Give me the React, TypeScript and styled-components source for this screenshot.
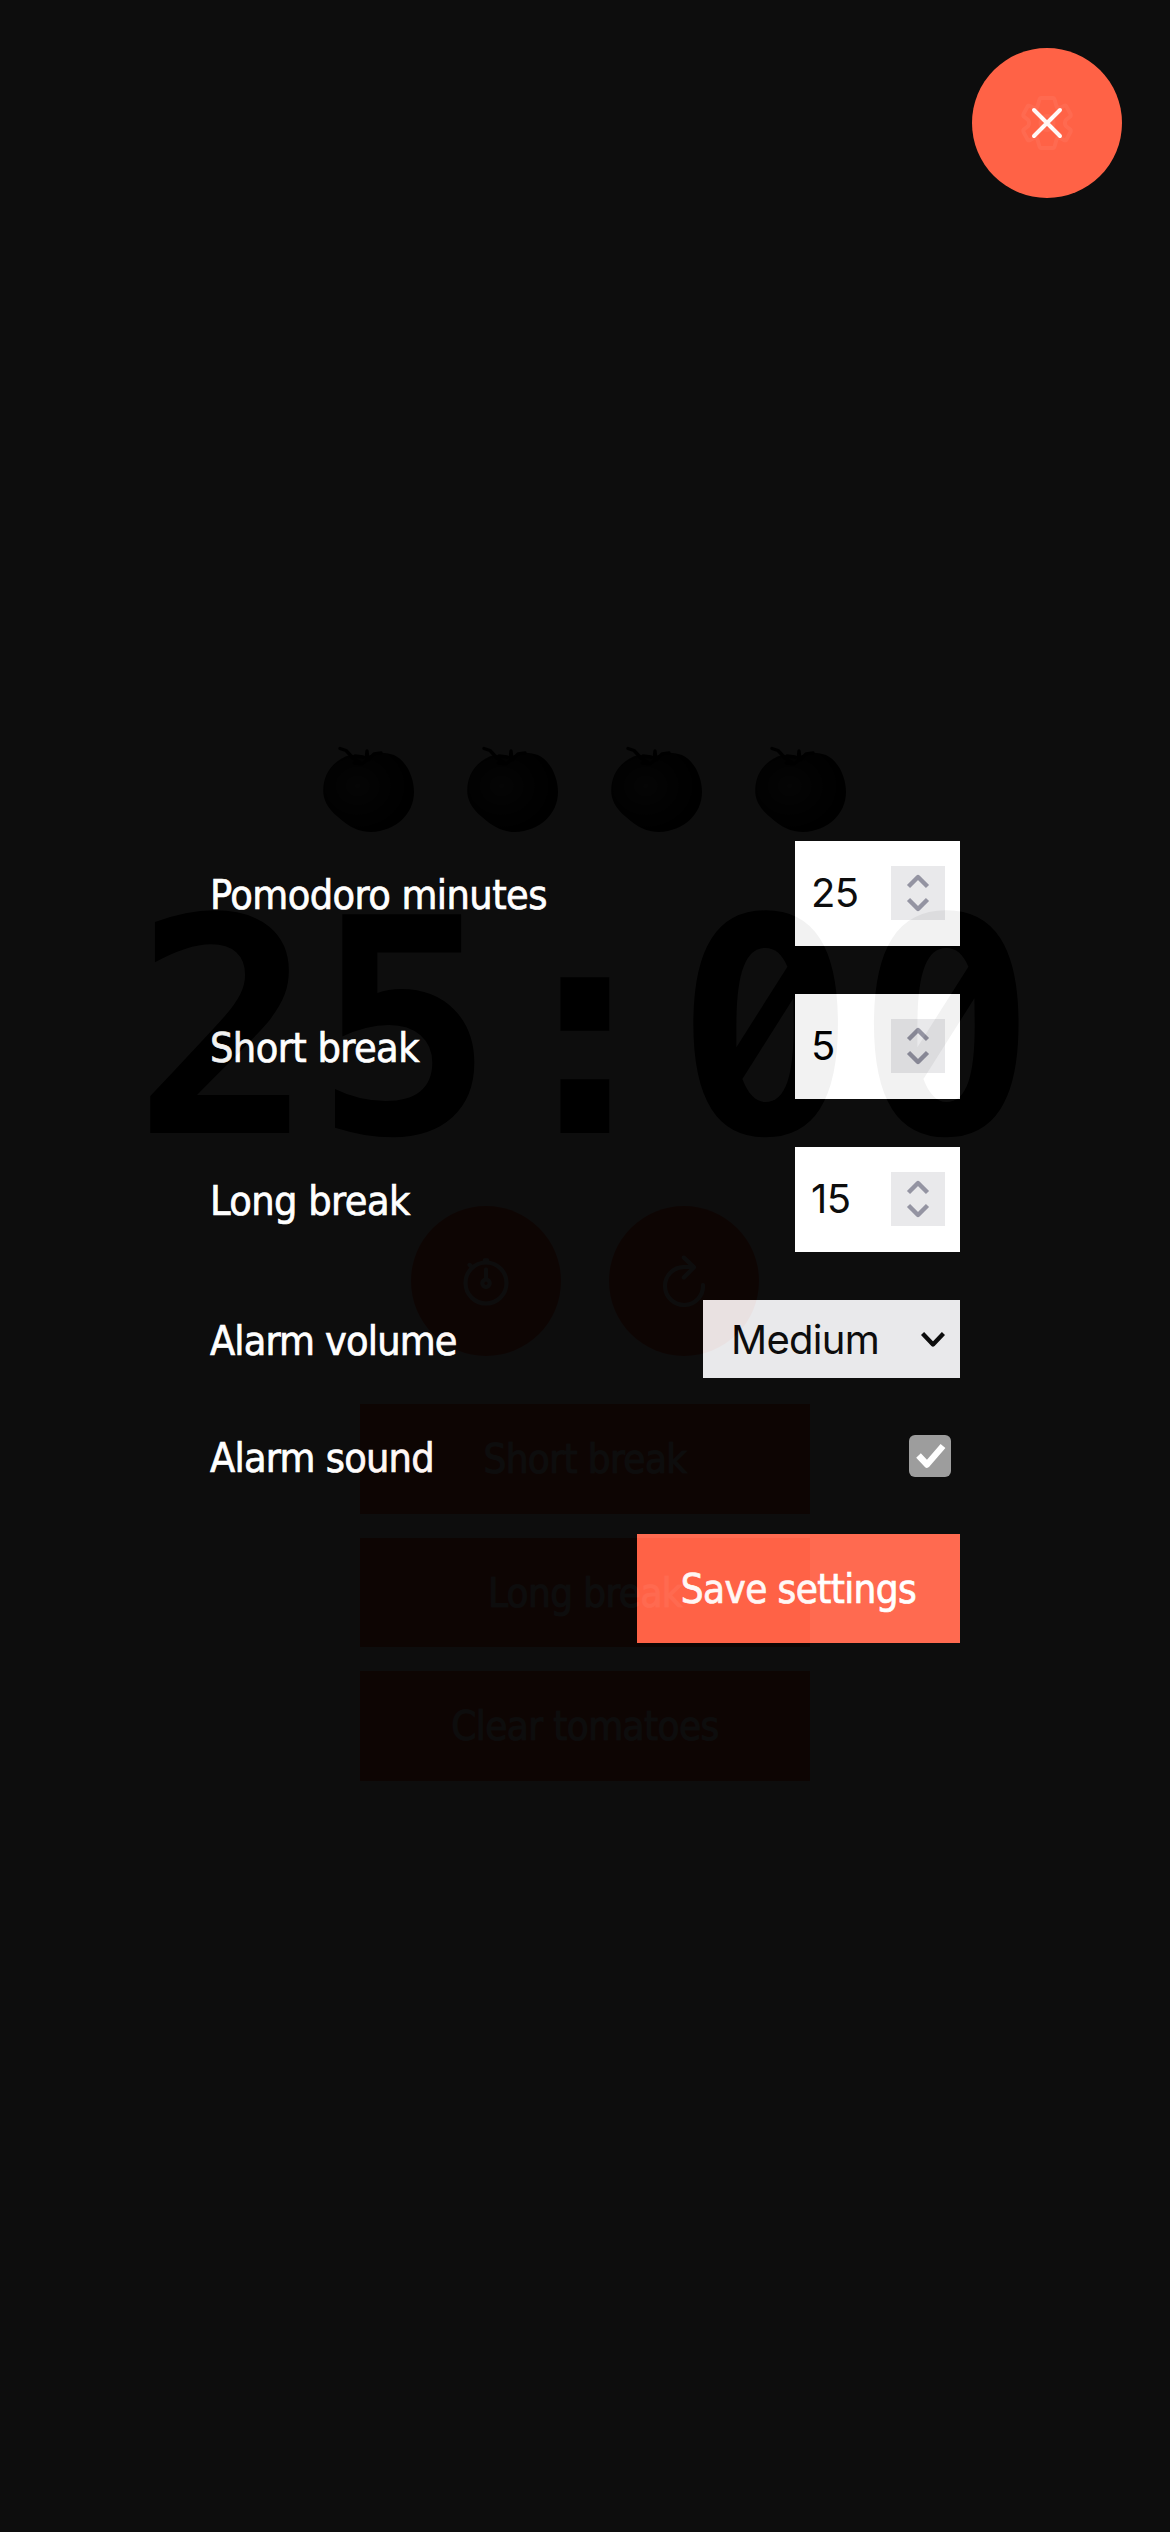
import React, { useState } from "react";
import styled, { createGlobalStyle } from "styled-components";

const GlobalStyle = createGlobalStyle`
  *, *::before, *::after { box-sizing: border-box; }
  body { margin: 0; background: #f5f5f5; }
  button, input, select { margin: 0; border: 0; border-radius: 0; }
`;

const uiFont = `Tahoma, "DejaVu Sans Condensed", "DejaVu Sans", sans-serif`;
const fieldFont = `Inter, "Liberation Sans", sans-serif`;

const Page = styled.main`
  height: 2532px;
  padding: 48px;
  display: flex;
  flex-direction: column;
  align-items: center;
  overflow: hidden;
  font-family: ${uiFont};
`;

const Overlay = styled.section`
  position: fixed;
  top: 0;
  left: 0;
  width: 1170px;
  height: 2532px;
  padding: 48px;
  display: flex;
  flex-direction: column;
  align-items: center;
  background: #000;
  opacity: 0.95;
  color: #fff;
  font-family: ${uiFont};
`;

const TopBar = styled.header`
  width: 100%;
  height: 150px;
  display: flex;
  justify-content: flex-end;
`;

const RoundButton = styled.button`
  width: 150px;
  height: 150px;
  padding: 0;
  display: grid;
  place-items: center;
  border-radius: 50%;
  background: tomato;
  color: #fff;
`;

const Icon = styled.svg`
  width: 66px;
  height: 66px;
  fill: none;
  stroke: currentColor;
  stroke-width: 4;
  stroke-linecap: round;
  stroke-linejoin: round;
`;

const TomatoRow = styled.div`
  margin-top: 546px;
  display: flex;
  gap: 48px;
`;

const TomatoImage = styled.svg`
  width: 96px;
  height: 96px;
`;

const Clock = styled.div`
  margin-top: 40px;
  height: 300px;
  display: flex;
  color: #000;
  font: bold 300px/300px "DejaVu Sans Mono", monospace;
`;

const Digit = styled.span`
  position: relative;
  height: 300px;
`;

const ZeroCounter = styled.svg`
  position: absolute;
  left: 0;
  top: 0;
  width: 180.6px;
  height: 300px;
`;

const Controls = styled.div`
  margin-top: 25.7px;
  display: flex;
  gap: 48px;
`;

const BreakButtons = styled.div`
  margin-top: 48.5px;
  width: 450px;
  display: flex;
  flex-direction: column;
  gap: 24px;
`;

const TextButton = styled.button`
  height: 109.5px;
  padding: 1px 0 0;
  background: tomato;
  color: #fff;
  font-family: ${uiFont};
  font-size: 40px;
  letter-spacing: -0.6px;
  -webkit-text-stroke: 0.7px currentColor;
`;

const SaveButton = styled(TextButton)`
  width: 323px;
  height: 109px;
  align-self: flex-end;
`;

const Form = styled.form`
  margin-top: 643px;
  width: 750px;
  display: flex;
  flex-direction: column;
  gap: 48px;
`;

const Row = styled.label<{ $height: number }>`
  height: ${(p) => p.$height}px;
  display: flex;
  align-items: center;
  justify-content: space-between;
`;

const Label = styled.span<{ $tracking?: number }>`
  padding-top: 3px;
  font-size: 41px;
  line-height: 48px;
  letter-spacing: ${(p) => p.$tracking ?? -0.55}px;
  -webkit-text-stroke: 0.7px currentColor;
`;

const NumberField = styled.span`
  width: 165px;
  height: 105px;
  padding: 0 15px 1px 16px;
  display: flex;
  align-items: center;
  justify-content: space-between;
  background: #fff;
`;

const NumberInput = styled.input`
  width: 70px;
  height: 60px;
  padding: 0;
  background: transparent;
  color: #000;
  font: 40px/60px ${fieldFont};
  letter-spacing: -0.6px;
  outline: none;
`;

const Spinner = styled.svg`
  width: 54px;
  height: 54px;
  background: #e8e8ea;
  fill: none;
  stroke: #8f8f9d;
  stroke-width: 4.4;
  stroke-linejoin: round;
`;

const SelectBox = styled.span`
  width: 257px;
  height: 78px;
  padding: 2px 15px 0 28px;
  display: flex;
  align-items: center;
  justify-content: space-between;
  background: #e8e8ea;
  color: #000;
`;

const Select = styled.select`
  appearance: none;
  width: 180px;
  height: 60px;
  padding: 0;
  background: transparent;
  color: inherit;
  font: 40px/60px ${fieldFont};
  letter-spacing: -0.7px;
  outline: none;
`;

const Chevron = styled.svg`
  width: 24px;
  height: 16px;
  fill: none;
  stroke: currentColor;
  stroke-width: 4.4;
  stroke-linejoin: round;
`;

const Checkbox = styled.svg`
  width: 42px;
  height: 42px;
  margin-right: 9px;
  border-radius: 6px;
  background: #989898;
  fill: none;
  stroke: #fff;
  stroke-width: 6.4;
  stroke-linejoin: round;
`;

const Tomato = ({ id }: { id: string }) => (
  <TomatoImage viewBox="0 0 96 96">
    <defs>
      <radialGradient id={id} cx="0.38" cy="0.42" r="0.6">
        <stop offset="0" stopColor="#606060" />
        <stop offset="0.5" stopColor="#2c2c2c" />
        <stop offset="1" stopColor="#080808" />
      </radialGradient>
    </defs>
    <path
      fill={`url(#${id})`}
      d="M2.2 47C2 30 12 16 29 11C37 11 44 13 50 11C58 7 67 9 73 11C86 17 93 34 93 48C93 70 75 87 50 88C38 88 28 83 17 73C6 64 2.2 55 2.2 47Z"
    />
    <path
      fill="none"
      stroke="#0a0a0a"
      strokeWidth="3.4"
      strokeLinecap="round"
      strokeLinejoin="round"
      d="M19 4.5L25 6.5L32 14L41 20L45 17L46 7L47 16L53 10L60 9M41 20L33 19M34 12L42 13"
    />
  </TomatoImage>
);

const Zero = () => (
  <Digit>
    0
    <ZeroCounter viewBox="0 0 180.6 300">
      <ellipse cx="90.2" cy="145" rx="36" ry="82" fill="#000" />
      <path
        fill="#f5f5f5"
        d="M112.4 86.7C107 74 100 68 90.2 68C70 68 61.4 95 61.4 145L61.4 167.3Z"
      />
      <path
        fill="#f5f5f5"
        d="M67.4 199C73 214 81 222 90.2 222C111 222 118.7 195 118.7 145L118.4 118.3Z"
      />
    </ZeroCounter>
  </Digit>
);

const GearIcon = () => (
  <Icon viewBox="0 0 66 66">
    <g transform="translate(2 0) scale(0.94 1)">
      <path d="M27 8H39Q41 8 41.5 11L43 16Q44 19 47 18L51 16Q53 15 54 17L58 24Q59 26 57 27L53 30Q51 33 53 36L57 39Q59 40 58 42L54 49Q53 51 51 50L47 48Q44 47 43 50L41.5 55Q41 58 39 58H27Q25 58 24.5 55L23 50Q22 47 19 48L15 50Q13 51 12 49L8 42Q7 40 9 39L13 36Q15 33 13 30L9 27Q7 26 8 24L12 17Q13 15 15 16L19 18Q22 19 23 16L24.5 11Q25 8 27 8Z" />
      <circle cx="33" cy="33" r="7" />
    </g>
  </Icon>
);

const CloseIcon = () => (
  <Icon viewBox="0 0 66 66">
    <path d="M20 20L46 46M46 20L20 46" />
  </Icon>
);

const StopwatchIcon = () => (
  <Icon viewBox="0 0 66 66">
    <circle cx="33" cy="35" r="20.5" />
    <circle cx="33" cy="35.3" r="3.7" />
    <path d="M33 21.5V31M31.8 12.2H34.2M16.5 16.8L19 19.2" />
  </Icon>
);

const ReloadIcon = () => (
  <Icon viewBox="0 0 66 66">
    <path d="M52 37A19 19 0 1 1 33 19H42.5M32.8 9.5L43 19.3L32.8 29.5" />
  </Icon>
);

interface MinutesRowProps {
  label: string;
  initial: number;
}

const MinutesRow = ({ label, initial }: MinutesRowProps) => {
  const [value, setValue] = useState(String(initial));
  return (
    <Row $height={105}>
      <Label>{label}</Label>
      <NumberField>
        <NumberInput
          inputMode="numeric"
          value={value}
          onChange={(e) => setValue(e.target.value)}
        />
        <Spinner viewBox="0 0 54 54">
          <path d="M17.5 20.5L27 11L36.5 20.5M17.5 33.5L27 43L36.5 33.5" />
        </Spinner>
      </NumberField>
    </Row>
  );
};

export default function App() {
  return (
    <>
      <GlobalStyle />
      <Page>
        <TopBar>
          <RoundButton type="button">
            <GearIcon />
          </RoundButton>
        </TopBar>
        <TomatoRow>
          {["t1", "t2", "t3", "t4"].map((id) => (
            <Tomato key={id} id={id} />
          ))}
        </TomatoRow>
        <Clock>
          <Digit>2</Digit>
          <Digit>5</Digit>
          <Digit>:</Digit>
          <Zero />
          <Zero />
        </Clock>
        <Controls>
          <RoundButton type="button">
            <StopwatchIcon />
          </RoundButton>
          <RoundButton type="button">
            <ReloadIcon />
          </RoundButton>
        </Controls>
        <BreakButtons>
          <TextButton type="button">Short break</TextButton>
          <TextButton type="button">Long break</TextButton>
          <TextButton type="button">Clear tomatoes</TextButton>
        </BreakButtons>
      </Page>
      <Overlay>
        <TopBar>
          <RoundButton type="button">
            <CloseIcon />
          </RoundButton>
        </TopBar>
        <Form>
          <MinutesRow label="Pomodoro minutes" initial={25} />
          <MinutesRow label="Short break" initial={5} />
          <MinutesRow label="Long break" initial={15} />
          <Row $height={78}>
            <Label $tracking={-0.85}>Alarm volume</Label>
            <SelectBox>
              <Select defaultValue="Medium">
                <option>Medium</option>
              </Select>
              <Chevron viewBox="0 0 24 16">
                <path d="M1.5 1.5L12 12.5L22.5 1.5" />
              </Chevron>
            </SelectBox>
          </Row>
          <Row $height={60}>
            <Label $tracking={-0.75}>Alarm sound</Label>
            <Checkbox viewBox="0 0 42 42">
              <path d="M9.5 20.5L18 29.5L34 11" />
            </Checkbox>
          </Row>
          <SaveButton type="button">Save settings</SaveButton>
        </Form>
      </Overlay>
    </>
  );
}
